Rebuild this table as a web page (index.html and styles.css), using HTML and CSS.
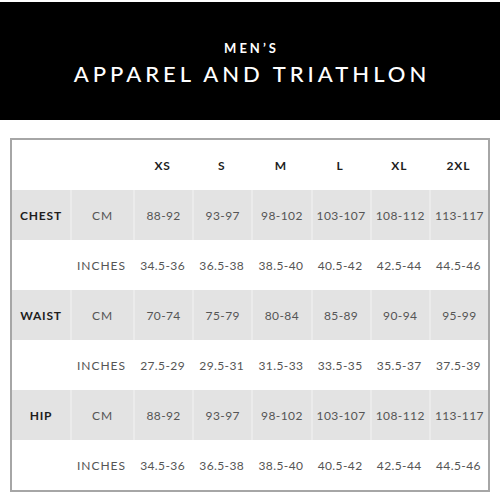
FILE: index.html
```html
<!DOCTYPE html>
<html>
<head>
<meta charset="utf-8">
<link rel="stylesheet" href="styles.css">
</head>
<body>
<header class="banner">
  <div class="sub">MEN’S</div>
  <div class="title">APPAREL AND TRIATHLON</div>
</header>
<div class="chart">
  <div class="row head">
    <div class="cell"></div><div class="cell"></div>
    <div class="cell b">XS</div><div class="cell b">S</div><div class="cell b">M</div>
    <div class="cell b">L</div><div class="cell b">XL</div><div class="cell b">2XL</div>
  </div>
  <div class="row grey">
    <div class="cell b">CHEST</div><div class="cell u">CM</div>
    <div class="cell">88-92</div><div class="cell">93-97</div><div class="cell">98-102</div>
    <div class="cell">103-107</div><div class="cell">108-112</div><div class="cell">113-117</div>
  </div>
  <div class="row">
    <div class="cell"></div><div class="cell u">INCHES</div>
    <div class="cell">34.5-36</div><div class="cell">36.5-38</div><div class="cell">38.5-40</div>
    <div class="cell">40.5-42</div><div class="cell">42.5-44</div><div class="cell">44.5-46</div>
  </div>
  <div class="row grey">
    <div class="cell b">WAIST</div><div class="cell u">CM</div>
    <div class="cell">70-74</div><div class="cell">75-79</div><div class="cell">80-84</div>
    <div class="cell">85-89</div><div class="cell">90-94</div><div class="cell">95-99</div>
  </div>
  <div class="row">
    <div class="cell"></div><div class="cell u">INCHES</div>
    <div class="cell">27.5-29</div><div class="cell">29.5-31</div><div class="cell">31.5-33</div>
    <div class="cell">33.5-35</div><div class="cell">35.5-37</div><div class="cell">37.5-39</div>
  </div>
  <div class="row grey">
    <div class="cell b">HIP</div><div class="cell u">CM</div>
    <div class="cell">88-92</div><div class="cell">93-97</div><div class="cell">98-102</div>
    <div class="cell">103-107</div><div class="cell">108-112</div><div class="cell">113-117</div>
  </div>
  <div class="row">
    <div class="cell"></div><div class="cell u">INCHES</div>
    <div class="cell">34.5-36</div><div class="cell">36.5-38</div><div class="cell">38.5-40</div>
    <div class="cell">40.5-42</div><div class="cell">42.5-44</div><div class="cell">44.5-46</div>
  </div>
</div>
</body>
</html>
```
FILE: styles.css
```css
html, body {
  margin: 0;
  padding: 0;
  background: #fff;
}
body {
  width: 500px;
  height: 500px;
  overflow: hidden;
  font-family: Lato, "Liberation Sans", sans-serif;
}
.banner {
  margin-top: 2px;
  height: 118px;
  background: #000;
  color: #fff;
  display: flex;
  flex-direction: column;
  align-items: center;
  box-sizing: border-box;
  padding-top: 36px;
}
.sub {
  font-size: 13px;
  font-weight: 700;
  letter-spacing: 3px;
  line-height: 20px;
  padding-left: 3px;
}
.title {
  margin-top: 2px;
  font-size: 22px;
  font-weight: 500;
  letter-spacing: 4px;
  line-height: 28px;
  padding-left: 4px;
}
.chart {
  margin: 18px 0 0 10px;
  width: 480px;
  border: 2px solid #a6a6a6;
  box-sizing: border-box;
}
.row {
  display: grid;
  grid-template-columns: 58px 63px repeat(6, 1fr);
  height: 50px;
}
.cell {
  display: flex;
  align-items: center;
  justify-content: center;
  font-size: 12px;
  color: #555;
  letter-spacing: 0.4px;
}
.grey .cell {
  background: #e3e3e3;
}
.grey .cell + .cell {
  border-left: 2px solid #ebebeb;
}
.cell.b {
  font-weight: 700;
  color: #1e1e1e;
  letter-spacing: 0.8px;
}
.cell.u {
  letter-spacing: 1px;
}
```
